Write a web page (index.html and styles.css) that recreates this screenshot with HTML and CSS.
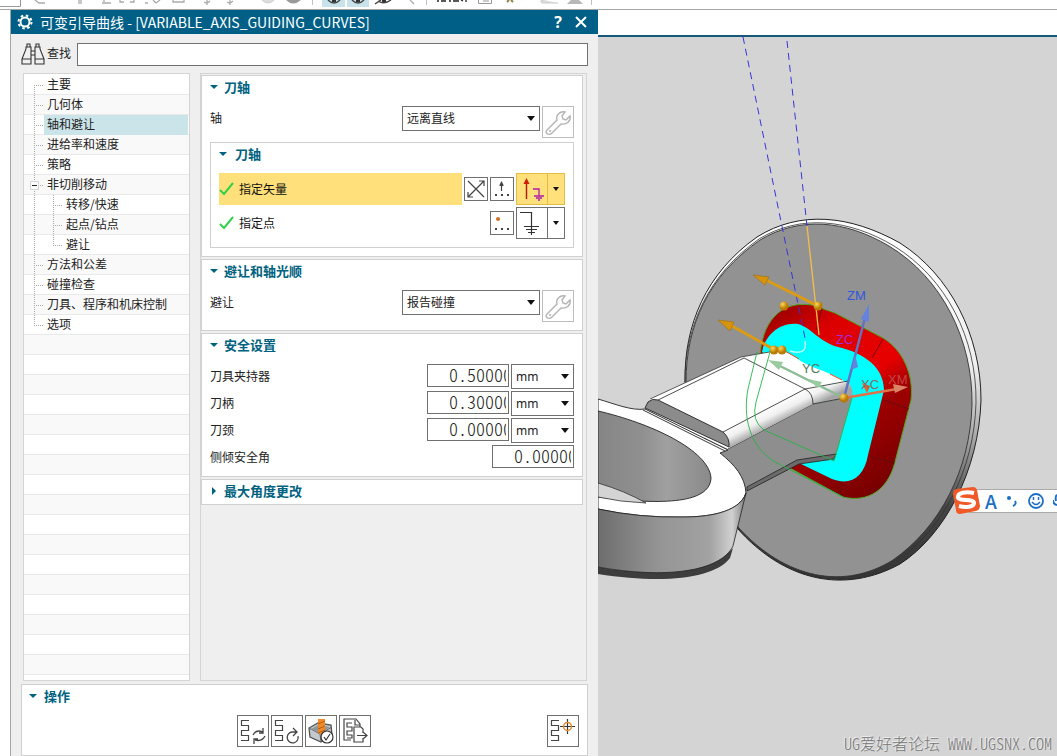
FILE: index.html
```html
<!DOCTYPE html>
<html lang="zh-CN">
<head>
<meta charset="utf-8">
<title>可变引导曲线</title>
<link rel="stylesheet" href="styles.css">
</head>
<body>
<svg class="defs" aria-hidden="true">
  <symbol id="wrench" viewBox="0 0 30 30"><path d="M4 23 14 13C12.500 8 17 4 22 5L19 9 20 12 23 13 27 9C28 14 24 18 18 17L9 26C6 29 1 26 4 23Z" fill="none" stroke="#b4b4b4" stroke-width="1.400"/><circle cx="7" cy="24" r="1" fill="#b4b4b4"/></symbol>
  <symbol id="check" viewBox="0 0 16 14"><path d="M1 8 5 12 14 1" fill="none" stroke="#35cf4a" stroke-width="2"/></symbol>
  <symbol id="path" viewBox="0 0 12 24"><path d="M10 1.500H2.500V6.500H9.500V11.500H2.500V16.500H9.500V21.500H2" fill="none" stroke="#444" stroke-width="1.200"/></symbol>
</svg>
<header class="toolbar">
  <svg class="toolbar-icons" viewBox="0 0 600 9" width="600" height="9" aria-hidden="true">
    <path d="M0 6.500H20.500V0" fill="none" stroke="#999"/>
    <path d="M35 0 39 3H45M81 0V4M79 0V4M102 3H111M104 0V2M120 0V2H124M130 2H134V0M145 3H148M153 0 156 3 160 0M173 0V2H184V0M204 2Q207 4 210 1M207 0V5M227 2Q230 4 233 1M230 0V5M410 0 414 4" fill="none" stroke="#aaa" stroke-width="1.300"/>
    <path d="M262 0Q268 6 274 0M558 3H542Q539 0 544 0" fill="#ddd" stroke="#ccc"/>
    <path d="M286 0Q293 7 301 0Z" fill="#999"/>
    <path d="M312.500 0V5M426.500 0V5M591.500 0V5" stroke="#c0c0c0"/>
    <path d="M322 0H345V7H322ZM347 0H369V7H347Z" fill="#c9e3ea"/>
    <path d="M328 0Q334 6 340 0M352 0Q358 6 364 0M378 1Q384 5 391 0M375 4 381 0" fill="none" stroke="#444" stroke-width="1.500"/>
    <path d="M332 0H336V2H332ZM356 0H360V2H356ZM382 0H386V2H382Z" fill="#333"/>
    <path d="M437 1H439M441 1H446M449 1H451M453 1H459M461 0 463 1M466 0V2" stroke="#222" fill="none" stroke-width="1.300"/>
    <path d="M478.500 0V3.500H491.500V0M483 1H489" stroke="#999" fill="none"/>
    <path d="M507 2 509 0M513 2 511 0" stroke="#8b8244" stroke-width="2"/>
    <path d="M567 4 571 0H579L583 4Z" fill="#b8b8b8"/>
  </svg>
</header>
<main class="workspace">
  <div class="gutter"></div>
  <section class="dialog" aria-labelledby="dialog-title">
    <header class="titlebar">
      <svg width="16" height="16" viewBox="0 0 16 16" aria-hidden="true"><circle cx="8" cy="8" r="4.500" fill="none" stroke="#fff" stroke-width="2"/><circle cx="8" cy="8" r="6.500" fill="none" stroke="#fff" stroke-width="2" stroke-dasharray="2.500 2.605"/></svg>
      <h1 id="dialog-title">可变引导曲线 - [VARIABLE_AXIS_GUIDING_CURVES]</h1>
      <button class="title-button" aria-label="帮助">?</button>
      <button class="title-button" aria-label="关闭"><svg width="12" height="12" viewBox="0 0 12 12"><path d="M1 1 11 11M11 1 1 11" stroke="#fff" stroke-width="2"/></svg></button>
    </header>
    <div class="search">
      <svg width="24" height="24" viewBox="0 0 24 24" aria-hidden="true"><path d="M1 17 5 7V5H6V2H9V5H10V22H1ZM1 17H10M5 5H10M23 17 19 7V5H18V2H15V5H14V22H23ZM23 17H14M19 5H14M10 9H14M10 13H14" fill="none" stroke="#333" stroke-width="1.100"/></svg>
      <label for="find">查找</label>
      <input id="find" type="text">
    </div>
    <div class="panes">
      <nav class="tree" aria-label="类别">
        <ul>
          <li class="first"><span class="branch"></span><button>主要</button></li>
          <li><span class="branch"></span><button>几何体</button></li>
          <li><span class="branch"></span><button class="selected">轴和避让</button></li>
          <li><span class="branch"></span><button>进给率和速度</button></li>
          <li><span class="branch"></span><button>策略</button></li>
          <li><span class="branch"><svg class="minus" width="9" height="9" viewBox="0 0 9 9"><path d="M.5.5H8.500V8.500H.5Z" fill="#fff" stroke="#d4d4d4"/><path d="M2 4.500H7" stroke="#222"/></svg></span><button>非切削移动</button></li>
          <li class="child"><span class="branch"></span><button>转移/快速</button></li>
          <li class="child"><span class="branch"></span><button>起点/钻点</button></li>
          <li class="child last-child"><span class="branch"></span><button>避让</button></li>
          <li><span class="branch"></span><button>方法和公差</button></li>
          <li><span class="branch"></span><button>碰撞检查</button></li>
          <li><span class="branch"></span><button>刀具、程序和机床控制</button></li>
          <li class="last"><span class="branch"></span><button>选项</button></li>
        </ul>
      </nav>
      <form class="settings">
        <section class="card">
          <h2><button type="button" class="fold">刀轴</button></h2>
          <div class="row tight">
            <label for="axis">轴</label>
            <span class="pick"><select id="axis"><option>远离直线</option></select></span>
            <button type="button" class="tool" aria-label="编辑轴"><svg width="30" height="30"><use href="#wrench"/></svg></button>
          </div>
          <div class="group">
            <h3><button type="button" class="fold">刀轴</button></h3>
            <div class="pick-row active">
              <span class="step"><svg width="16" height="14" aria-hidden="true"><use href="#check"/></svg>指定矢量</span>
              <button type="button" class="small" aria-label="反向"><svg width="22" height="22" viewBox="0 0 22 22"><path d="M3 3 19 19M3 19 19 3M14 3H19V8M3 14V19H8" fill="none" stroke="#444" stroke-width="1.200"/></svg></button>
              <button type="button" class="small" aria-label="矢量对话框"><svg width="22" height="22" viewBox="0 0 22 22"><path d="M10.500 13V4" stroke="#444" stroke-width="1.200"/><path d="M8.500 7 10.500 3 12.500 7V8H8.500ZM4 16H6V18H4ZM10 16H12V18H10ZM16 16H18V18H16Z" fill="#444"/></svg></button>
              <span class="split">
                <button type="button" aria-label="矢量类型"><svg width="30" height="30" viewBox="0 0 30 30"><path d="M9.500 25V9" stroke="#b02010" stroke-width="1.500"/><path d="M6.500 10 9.500 4 12.500 10Z" fill="#d21c0c"/><path d="M16 15H22V22M17 22H27M19 24H25M21 26H23" fill="none" stroke="#b01ca8" stroke-width="1.300"/></svg></button>
                <button type="button" class="more" aria-label="更多矢量类型"></button>
              </span>
            </div>
            <div class="pick-row">
              <span class="step"><svg width="16" height="14" aria-hidden="true"><use href="#check"/></svg>指定点</span>
              <button type="button" class="small" aria-label="点对话框"><svg width="22" height="22" viewBox="0 0 22 22"><circle cx="7" cy="7" r="2" fill="#d17022"/><path d="M4 16H6V18H4ZM10 16H12V18H10ZM16 16H18V18H16Z" fill="#444"/></svg></button>
              <span class="split">
                <button type="button" aria-label="点类型"><svg width="30" height="30" viewBox="0 0 30 30"><path d="M3 4.500H14.500V27M7 18.500H22M9 21.500H20M11 24.500H18" fill="none" stroke="#333" stroke-width="1.200"/></svg></button>
                <button type="button" class="more" aria-label="更多点类型"></button>
              </span>
            </div>
          </div>
        </section>
        <section class="card">
          <h2><button type="button" class="fold">避让和轴光顺</button></h2>
          <div class="row">
            <label for="avoid">避让</label>
            <span class="pick"><select id="avoid"><option>报告碰撞</option></select></span>
            <button type="button" class="tool" aria-label="编辑避让"><svg width="30" height="30"><use href="#wrench"/></svg></button>
          </div>
        </section>
        <section class="card">
          <h2><button type="button" class="fold">安全设置</button></h2>
          <div class="values">
            <div class="value-row"><label for="holder">刀具夹持器</label><input id="holder" type="text" value="0.50000"><span class="pick unit"><select aria-label="刀具夹持器单位"><option>mm</option></select></span></div>
            <div class="value-row"><label for="shank">刀柄</label><input id="shank" type="text" value="0.30000"><span class="pick unit"><select aria-label="刀柄单位"><option>mm</option></select></span></div>
            <div class="value-row"><label for="neck">刀颈</label><input id="neck" type="text" value="0.00000"><span class="pick unit"><select aria-label="刀颈单位"><option>mm</option></select></span></div>
            <div class="value-row"><label for="tilt">侧倾安全角</label><input id="tilt" type="text" value="0.00000"></div>
          </div>
        </section>
        <section class="card">
          <h2><button type="button" class="fold closed">最大角度更改</button></h2>
        </section>
      </form>
    </div>
    <section class="actions">
      <h2><button class="fold">操作</button></h2>
      <div class="action-row">
        <div class="action-group">
          <button class="tool dark" aria-label="生成"><svg width="30" height="30" viewBox="0 0 30 30"><use href="#path" x="1" y="3" width="12" height="24"/><path d="M15 19Q18 13 25 16M25 12V17H21M27 20Q24 26 17 24M16 28V23H20" fill="none" stroke="#444" stroke-width="1.300"/></svg></button>
          <button class="tool dark" aria-label="重播"><svg width="30" height="30" viewBox="0 0 30 30"><use href="#path" x="1" y="3" width="12" height="24"/><path d="M26 20A5.500 5.500 0 1 1 20 16H25M21 12 25 16 21 20" fill="none" stroke="#444" stroke-width="1.300"/></svg></button>
          <button class="tool dark" aria-label="确认"><svg width="30" height="30" viewBox="0 0 30 30"><path d="M3 12 12 7 25 9 26 19 15 26 4 21Z" fill="#c5c9cc" stroke="#555" stroke-width="1.300"/><path d="M3 12 14 18 26 11M14 18 15 26" fill="none" stroke="#666"/><path d="M14 18 5 13 12 9 24 11Z" fill="#909699"/><path d="M12 3H19V17L16 19 12 17Z" fill="#f08a27"/><path d="M12 8 19 5M12 13 19 10M12 17 19 14" stroke="#b85b12"/><circle cx="21" cy="21" r="6" fill="#fff" stroke="#333" stroke-width="1.200"/><path d="M18 21 20 24 24 18" fill="none" stroke="#333" stroke-width="1.200"/></svg></button>
          <button class="tool dark" aria-label="列表"><svg width="30" height="30" viewBox="0 0 30 30"><path d="M11 24H4V3H16L20 8V11M15 4V9H20M12 7H7V11H12V15H7V19H12V22H7" fill="none" stroke="#444" stroke-width="1.200"/><path d="M23 17V13L21 11H14V26H23V22M17 19.500H27M23 16 27 19.500 23 23" fill="none" stroke="#444" stroke-width="1.200"/></svg></button>
        </div>
        <button class="tool dark" aria-label="显示刀轨"><svg width="30" height="30" viewBox="0 0 30 30"><use href="#path" x="1" y="3" width="12" height="24"/><path d="M19.500 3V18M12 10.500H27" stroke="#333" stroke-width="1.200"/><circle cx="19.500" cy="10.500" r="4" fill="none" stroke="#e68a2e" stroke-width="1.500"/></svg></button>
      </div>
    </section>
  </section>
  <section class="view" aria-label="图形窗口">
    <div class="view-head"></div>
    <div class="canvas">
      <svg class="scene" viewBox="598 37 459 719" preserveAspectRatio="xMinYMin slice" aria-label="零件模型">
        <defs>
          <linearGradient id="rim" x1="0" y1="0" x2="0" y2="1"><stop offset="0" stop-color="#fff"/><stop offset=".4" stop-color="#f0f0f0"/><stop offset=".6" stop-color="#aaa"/><stop offset=".8" stop-color="#444"/><stop offset="1" stop-color="#333"/></linearGradient>
          <linearGradient id="side" x1="598" x2="747" y1="0" y2="0" gradientUnits="userSpaceOnUse"><stop offset="0" stop-color="#6d6d6d"/><stop offset=".4" stop-color="#949494"/><stop offset=".75" stop-color="#a2a2a2"/><stop offset=".9" stop-color="#d0d0d0"/><stop offset="1" stop-color="#777"/></linearGradient>
          <linearGradient id="bore" x1="598" x2="712" y1="0" y2="0" gradientUnits="userSpaceOnUse"><stop offset="0" stop-color="#858585"/><stop offset=".4" stop-color="#909090"/><stop offset=".6" stop-color="#a0a0a0"/><stop offset="1" stop-color="#898989"/></linearGradient>
          <linearGradient id="edge" x1="765" y1="408" x2="774" y2="426" gradientUnits="userSpaceOnUse"><stop offset="0" stop-color="#fff"/><stop offset=".5" stop-color="#f0f0f0"/><stop offset="1" stop-color="#a4a4a4"/></linearGradient>
          <linearGradient id="red" x1="765" y1="320" x2="880" y2="490" gradientUnits="userSpaceOnUse"><stop offset="0" stop-color="#a00000"/><stop offset=".2" stop-color="#dc0000"/><stop offset=".5" stop-color="#e80000"/><stop offset=".65" stop-color="#9e0000"/><stop offset="1" stop-color="#780000"/></linearGradient>
          <radialGradient id="ball" cx=".35" cy=".3"><stop offset="0" stop-color="#ffd75e"/><stop offset="1" stop-color="#b97b00"/></radialGradient>
        </defs>
        <path d="M685 382C684 325 706 273 757 237C800 210 850 215 900 243C950 275 981 335 981 400C979 470 945 535 900 564C845 594 785 582 737 528Z" fill="url(#rim)" stroke="#222"/>
        <path d="M685 382C685 326 708 275 759 239C800 214 849 219 894 246C946 278 977 338 976 403C974 470 943 530 896 561" fill="none" stroke="#333" stroke-width=".8"/>
        <path d="M686 382C686 326 708 276 760 240C800 216 845 220 889 246C942 278 973 340 972 405C970 470 940 527 893 560C845 590 786 580 738 527Z" fill="#929292" stroke="#333" stroke-width=".9"/>
        <path d="M760 356C762 325 778 300 812 305L835 313 883 338C903 350 914 375 911 400L895 462C888 490 868 503 843 497L788 467 800 400Z" fill="url(#red)" stroke="#4fa51e"/>
        <path d="M816 330 822 308M872 358 883 339M884 400 909 409M871 457 895 463M841 482V496" fill="none" stroke="#5b1010" stroke-width=".8"/>
        <path d="M762 352C765 335 780 322 798 324C812 328 819 342 838 347C865 353 884 368 884 390L868 455C864 478 850 486 832 479L799 463 820 400Z" fill="#00ffff"/>
        <path d="M720 452 728 447 813 404 852 397 836 455Q833 460 820 459L797 463 747 490Z" fill="#8e8e8e"/>
        <path d="M747 487 797 460 836 454 834 459 799 464 747 491Z" fill="#6b6b6b" stroke="#222" stroke-width=".8"/>
        <path d="M650 399 741 357 775 351Q787 350 798 359C813 371 843 373 852 390V397L813 404 728 449 646 410Z" fill="#fff"/>
        <path d="M650 399 741 357 775 351M728 449 813 404" fill="none" stroke="#333" stroke-width=".8"/>
        <path d="M723 432 805 389 848 382Q854 389 852 397L813 404 729 448Z" fill="url(#edge)"/>
        <path d="M658 400 744 358 805 389 723 432M805 389Q813 393 813 404M805 389 848 381M813 404 850 397" fill="none" stroke="#222" stroke-width=".8"/>
        <path d="M785 351 799 359M830 374 842 380" fill="none" stroke="#e04a20"/>
        <path d="M598 399C615 404 632 411 645 409L728 450 720 453C735 465 745 477 746 493C739 514 704 517 683 517Q640 518 598 509Z" fill="#fff" stroke="#222" stroke-width=".9"/>
        <path d="M598 411C650 423 709 450 711 478C710 500 675 507 598 497Z" fill="url(#bore)" stroke="#222" stroke-width=".9"/>
        <path d="M598 483Q625 491 646 503Q620 502 598 497Z" fill="#d4d4d4" stroke="#333" stroke-width=".8"/>
        <path d="M598 567C650 577 711 573 733 548L730 558C714 579 663 584 598 574Z" fill="#3d3d3d"/>
        <path d="M598 509Q640 518 683 517C704 517 739 514 746 493L733 546C720 572 665 579 598 567Z" fill="url(#side)" stroke="#222" stroke-width=".8"/>
        <path d="M645 408 648 402Q652 398 658 400L723 432Q730 438 729 447Z" fill="#8b8b8b" stroke="#222" stroke-width=".9"/>
        <path d="M643 410 725 451" stroke="#222" stroke-width=".9"/>
        <path d="M757 352 748 389C743 415 748 447 777 463L843 497M770 352 756 402Q751 421 764 430L834 461 852 398" fill="none" stroke="#27b34a" stroke-width=".9"/>
        <g fill="none" stroke="#3535d8" stroke-dasharray="7 5"><path d="M743 37 805 338"/><path d="M787 41 807 226"/></g>
        <path d="M807 226 819 335" stroke="#f4bf4c" stroke-width="1.300"/>
        <path d="M790 351Q808 356 805 341" fill="none" stroke="#bff" stroke-width="1.500"/>
        <path d="M818 306 766 280M775 350 732 326" stroke="#dd9b12" stroke-width="3"/>
        <path d="M753 275 769 277 765 285ZM718 320 734 322 730 331Z" fill="#d59410" stroke="#a26d05" stroke-width=".6"/>
        <g fill="url(#ball)"><circle cx="784" cy="306" r="4.500"/><circle cx="818" cy="306" r="4.500"/><circle cx="774" cy="350" r="4.500"/><circle cx="782" cy="350" r="4.500"/></g>
        <path d="M844 398 865 318" stroke="#6072c0" stroke-width="2.500"/><path d="M869 304 861 319 869 322ZM855 354 851 370 858 367Z" fill="#6582df"/>
        <path d="M844 398 776 364" stroke="#8dbb96" stroke-width="2.500"/><path d="M768 360 783 362 779 370ZM808 379 822 382 818 388Z" fill="#9aca9f"/>
        <path d="M844 398 897 389" stroke="#df724a" stroke-width="2.500"/><path d="M908 387 893 384 895 393Z" fill="#d98367"/><path d="M862 383 870 386 867 393Z" fill="#f35a20"/>
        <circle cx="844" cy="398" r="4.500" fill="url(#ball)"/>
        <g class="axis-labels"><text x="847" y="300" fill="#3156df">ZM</text><text x="836" y="344" fill="#a52bd2">ZC</text><text x="802" y="373" fill="#55785c">YC</text><text x="861" y="389" fill="#896a67">XC</text><text x="888" y="384" fill="#c74343">XM</text></g>
      </svg>
      <div class="ime">
        <svg class="ime-logo" width="28" height="28" viewBox="0 0 28 28" aria-hidden="true"><path d="M4 3 21 1Q24 1 25 4L28 20Q28 24 24 25L8 28Q4 28 4 24L1 8Q1 4 4 3Z" fill="#f05a28"/><path d="M22 7C13 5 6 7 6 11C6 16 22 12 22 17C22 21 14 22 7 20" fill="none" stroke="#fff" stroke-width="4"/></svg>
        <span class="ime-letter">A</span>
        <svg width="12" height="16" viewBox="0 0 12 16"><circle cx="3" cy="5" r="2" fill="#1d6fc4"/><path d="M9 8Q11 11 7 13" fill="none" stroke="#1d6fc4" stroke-width="2"/></svg>
        <svg width="18" height="18" viewBox="0 0 18 18"><circle cx="9" cy="9" r="7" fill="none" stroke="#1d6fc4" stroke-width="1.800"/><path d="M6.500 5V8M11.500 5V8M5 10Q9 15 13 10" fill="none" stroke="#1d6fc4" stroke-width="1.500"/></svg>
        <svg class="mic" width="4" height="18" viewBox="0 0 4 18"><path d="M4 3Q2 4 3 9M0 8Q0 12 4 13" fill="none" stroke="#1d6fc4" stroke-width="2"/></svg>
      </div>
      <p class="watermark">UG爱好者论坛 WWW.UGSNX.COM</p>
    </div>
  </section>
</main>
</body>
</html>
```
FILE: styles.css
```css
* { box-sizing: border-box; }
body {
  margin: 0;
  min-height: 100vh;
  display: flex;
  flex-direction: column;
  background: #fff;
  color: #222;
  font: 12px/20px "Noto Sans CJK SC", sans-serif;
}
h1, h2, h3, p, ul { margin: 0; padding: 0; }
ul { list-style: none; }
svg { display: block; flex: none; }
button, input, select { font: inherit; color: inherit; margin: 0; border-radius: 0; }
button { padding: 0; border: 0; background: none; }
.defs { position: absolute; width: 0; height: 0; }

.toolbar { height: 10px; border-bottom: 1px solid #a5a5a5; overflow: hidden; }
.workspace {
  flex: 1;
  display: grid;
  grid-template-columns: 11px minmax(0, 587fr) minmax(0, 459fr);
}
.gutter { border-right: 1px solid #a5a5a5; }

.dialog { display: flex; flex-direction: column; background: #efefef; }
.titlebar {
  display: flex;
  align-items: center;
  gap: 7px;
  height: 24px;
  padding: 0 9px 0 6px;
  background: #005f87;
  color: #fff;
}
.titlebar h1 { flex: 1; font: 14px/24px "Noto Sans CJK SC", sans-serif; white-space: nowrap; }
.title-button { width: 16px; font: bold 16px/20px "Noto Sans", sans-serif; }
.title-button svg { margin: auto; }
.search { display: flex; align-items: center; gap: 2px; padding: 8px 10px 7px; }
.search label { padding-bottom: 2px; }
.search input { flex: 1; min-width: 0; height: 23px; margin-left: 4px; border: 1px solid #707070; background: #fff; }

.panes { flex: 1; display: grid; grid-template-columns: 167fr 387fr; gap: 10px; padding: 0 11px 3px 12px; }
.tree {
  padding: 1px 1px 0 0;
  border: 1px solid #d4d4d4;
  background: repeating-linear-gradient(#fff 0 19px, #e9e9e9 19px 20px, #f9f9f9 20px 39px, #e9e9e9 39px 40px) 0 1px;
}
.tree li { display: flex; height: 20px; }
.tree button { flex: 1; padding: 0 0 2px 3px; text-align: left; line-height: 18px; white-space: nowrap; }
.tree .selected { background: #cbe4e9; }
.branch {
  flex: none;
  width: 20px;
  background:
    repeating-linear-gradient(#aaa 0 1px, transparent 1px 2px) 10px 0 / 1px 100% no-repeat,
    repeating-linear-gradient(90deg, #aaa 0 1px, transparent 1px 2px) 10px 10px / 9px 1px no-repeat;
}
.minus { margin: 6px; }
.first .branch { background-position: 10px 10px, 10px 10px; }
.last .branch { background-size: 1px 10px, 9px 1px; }
.child .branch {
  width: 39px;
  background:
    repeating-linear-gradient(#aaa 0 1px, transparent 1px 2px) 10px 0 / 1px 100% no-repeat,
    repeating-linear-gradient(#aaa 0 1px, transparent 1px 2px) 29px 0 / 1px 100% no-repeat,
    repeating-linear-gradient(90deg, #aaa 0 1px, transparent 1px 2px) 29px 10px / 9px 1px no-repeat;
}
.last-child .branch { background-size: 1px 100%, 1px 10px, 9px 1px; }

.settings { display: flex; flex-direction: column; gap: 2px; padding: 1px 3px 0 0; border: 1px solid #d4d4d4; }
.card { padding: 0 8px; border: 1px solid #d0d0d0; background: #fff; }
.fold {
  display: flex;
  align-items: center;
  gap: 7px;
  padding-bottom: 2px;
  color: #00627f;
  font: bold 13px/22px "Noto Sans CJK SC", sans-serif;
}
.card .fold { gap: 6px; }
.fold::before { content: ""; width: 8px; height: 4px; background: #00627f; clip-path: polygon(0 0, 100% 0, 50% 100%); }
.fold.closed::before { width: 4px; height: 8px; margin: 0 2px; clip-path: polygon(0 0, 100% 50%, 0 100%); }
.row { display: flex; align-items: flex-start; gap: 2px; padding: 6px 0 8px; }
.row.tight { padding-bottom: 4px; }
.row label, .value-row label { flex: 1; line-height: 23px; }
.pick { position: relative; flex: none; width: 138px; }
.pick::after {
  content: "";
  position: absolute;
  right: 5px;
  top: 10px;
  width: 8px;
  height: 5px;
  background: #111;
  clip-path: polygon(0 0, 100% 0, 50% 100%);
  pointer-events: none;
}
.pick select { appearance: none; display: block; width: 100%; height: 25px; padding: 0 4px 1px; border: 1px solid #707070; background: #fff; }
.unit { width: 63px; }
.unit select { padding-bottom: 0; font-family: "Noto Sans", sans-serif; }
.tool { flex: none; width: 32px; height: 32px; border: 1px solid #bdbdbd; background: #fff; }
.tool.dark { border-color: #707070; }
.group { margin-bottom: 8px; padding: 0 8px 8px; border: 1px solid #d0d0d0; }
.group .fold { gap: 8px; }
.group h3 { padding-bottom: 6px; }
.pick-row { display: flex; align-items: center; gap: 2px; height: 32px; }
.pick-row + .pick-row { margin-top: 2px; }
.step { flex: 1; display: flex; align-items: center; gap: 4px; height: 32px; color: #111; }
.active .step { background: #ffe07a; }
.small { width: 24px; height: 24px; border: 1px solid #707070; background: #fff; }
.split { display: flex; width: 49px; height: 32px; border: 1px solid #707070; background: #fff; }
.split .more { flex: 1; display: grid; place-items: center; border-left: 1px solid #707070; }
.more::before { content: ""; width: 6px; height: 4px; background: #111; clip-path: polygon(0 0, 100% 0, 50% 100%); }
.active .split { border-color: #e2bd42; background: #ffe07a; }
.active .more { border-color: #e2bd42; }
.values { display: grid; gap: 2px; padding: 6px 0; }
.value-row { display: flex; align-items: flex-start; gap: 2px; min-height: 25px; }
.value-row input {
  width: 82px;
  height: 23px;
  padding: 0 2px 4px 21px;
  border: 1px solid #707070;
  background: #fff;
  font: 300 18px/17px "Noto Sans CJK SC", sans-serif;
  font-feature-settings: "hwid";
}

.actions { margin: 0 10px; padding: 0 8px 8px 7px; border: 1px solid #d0d0d0; background: #fff; }
.action-row { display: flex; padding-top: 6px; }
.action-group { flex: 1; display: flex; justify-content: center; gap: 2px; padding-left: 32px; }

.view { display: flex; flex-direction: column; }
.view-head { height: 27px; border-bottom: 2px solid #17577a; background: #fff; }
.canvas { position: relative; flex: 1; overflow: hidden; background: #d4d4d4; }
.scene { position: absolute; inset: 0; width: 100%; height: 100%; }
.axis-labels { font: 13px "Liberation Sans", sans-serif; }
.ime {
  position: absolute;
  right: 0;
  top: 452px;
  width: 88px;
  height: 24px;
  display: flex;
  align-items: center;
  gap: 9px;
  padding-left: 15px;
  border: 1px solid #aaa;
  border-right: 0;
  background: #fff;
}
.ime-logo { position: absolute; left: -18px; top: -4px; }
.ime-letter { color: #1d6fc4; font: 500 19px/22px "Noto Sans CJK SC", sans-serif; }
.mic { position: absolute; right: 0; top: 2px; }
.watermark {
  position: absolute;
  right: 5px;
  bottom: 3px;
  color: #777;
  font: 300 16px/20px "Noto Sans CJK SC", sans-serif;
  font-feature-settings: "hwid";
  text-shadow: -1px -1px #eee;
  white-space: nowrap;
}
```
